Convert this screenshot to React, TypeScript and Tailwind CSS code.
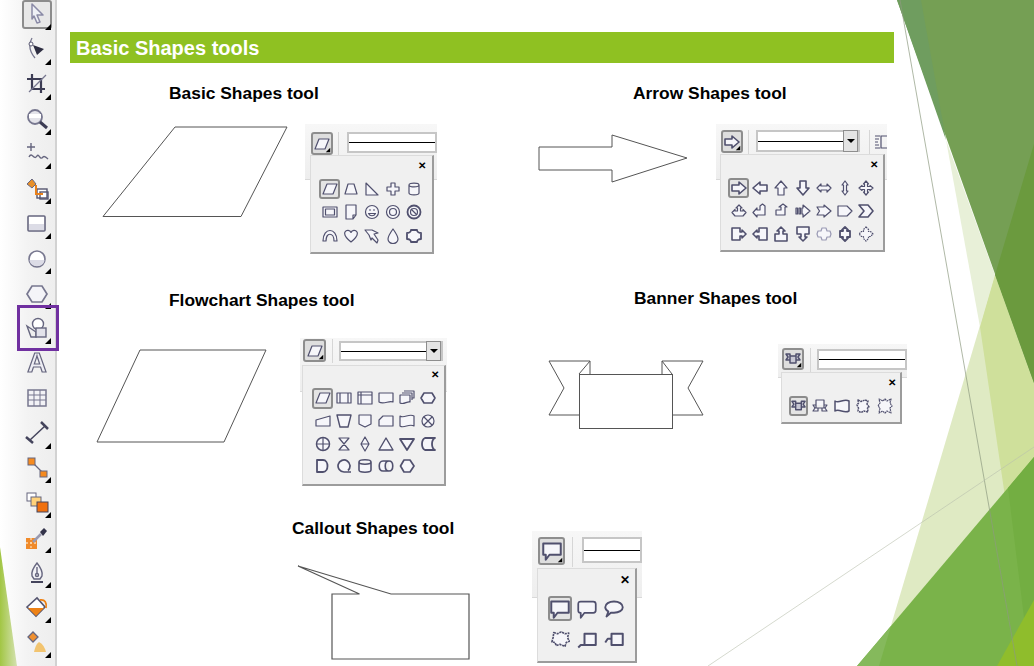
import type { ReactNode } from "react";

const ink = "#50506e";

// small shape glyphs for the flyouts, all in a 16x16 box
const shapes: Record<string, ReactNode> = {
  para: <path d="M5 3H15L11 13H1Z" />,
  trap: <path d="M5 3H11L14 13H2Z" />,
  rtri: <path d="M2 2L14 14H2Z" />,
  cross: <path d="M6 2H10V6H14V10H10V14H6V10H2V6H6Z" />,
  can: <path d="M3 4C3 1.5 13 1.5 13 4V12C13 14.5 3 14.5 3 12ZM3 4C3 6.5 13 6.5 13 4" />,
  frame: <path d="M1 3H15V13H1ZM3.5 5H12.5V11H3.5Z" />,
  page: <path d="M3 1H13V11L10 15H3ZM13 11H10V15" />,
  smile: <><circle cx="8" cy="8" r="6.5" /><path d="M5 6H7M9 6H11M4.5 9.5C6 12.5 10 12.5 11.5 9.5Z" /></>,
  ring: <><circle cx="8" cy="8" r="6.5" /><circle cx="8" cy="8" r="3.5" /></>,
  noway: <><circle cx="8" cy="8" r="6.5" strokeWidth="1.8" /><circle cx="8" cy="8" r="3.5" /><path d="M5 5L11 11" /></>,
  arch: <path d="M1 13C1 -1 15 -1 15 13H12C12 4 4 4 4 13Z" />,
  heart: <path d="M8 14C2 9 1 6 2 4C3.5 1.5 7 2 8 4.5C9 2 12.5 1.5 14 4C15 6 14 9 8 14Z" />,
  bolt: <path d="M1 2L8 2L14 5L10 6L14 12L13 15L8 10L7 12L5 7Z" />,
  drop: <path d="M8 1C8 1 13 8 13 11A5 4.5 0 0 1 3 11C3 8 8 1 8 1Z" />,
  plaque: <path strokeWidth="1.8" d="M5 2H11C11 3 12 5 15 5V11C12 11 11 13 11 14H5C5 13 4 11 1 11V5C4 5 5 3 5 2Z" />,
  aR: <path strokeWidth="1.6" d="M1 5H8V2L15 8L8 14V11H1Z" />,
  aL: <path strokeWidth="1.6" d="M15 5H8V2L1 8L8 14V11H15Z" />,
  aU: <path d="M5 15V8H2L8 1L14 8H11V15Z" />,
  aD: <path strokeWidth="1.6" d="M5 1V8H2L8 15L14 8H11V1Z" />,
  aLR: <path d="M1 8L5 4V6H11V4L15 8L11 12V10H5V12Z" />,
  aUD: <path d="M8 1L11 5H9.5V11H11L8 15L5 11H6.5V5H5Z" />,
  a4: <path d="M8 1L10.5 4H9.5V6.5H12V5.5L15 8L12 10.5V9.5H9.5V12H10.5L8 15L5.5 12H6.5V9.5H4V10.5L1 8L4 5.5V6.5H6.5V4H5.5Z" />,
  a3: <path d="M8 2L11 5H9.5V8H12V6.5L15 9.5L12 13H4L1 9.5L4 6.5V8H6.5V5H5Z" />,
  aBL: <path d="M13 3V12H5V14L1 9.5L5 5V7H8V3L10.5 1Z" />,
  aBR: <path d="M3 12V7H8V4H6L10 1L14 4H12V12Z" />,
  aStripe: <path d="M1 5H2.5V11H1ZM4 5H5.5V11H4ZM7 5H8V2L15 8L8 14V11H7Z" />,
  aNotch: <path d="M1 4H8V2L15 8L8 14V12H1L3.5 8Z" />,
  pent: <path d="M1 3H10L15 8L10 13H1Z" />,
  chev: <path strokeWidth="1.6" d="M1 2H10L15 8L10 14H1L6 8Z" />,
  callR: <path strokeWidth="1.6" d="M1 2H9V6H11V4L15 8L11 12V10H9V14H1Z" />,
  callL: <path strokeWidth="1.6" d="M15 2H7V6H5V4L1 8L5 12V10H7V14H15Z" />,
  callU: <path strokeWidth="1.6" d="M2 8H6V5H4L8 1L12 5H10V8H14V15H2Z" />,
  callD: <path strokeWidth="1.6" d="M2 1H14V8H10V11H12L8 15L4 11H6V8H2Z" />,
  crossLt: <path stroke="#9a9ab4" d="M6 2H10L11 5H14L15 8L14 11H11L10 14H6L5 11H2L1 8L2 5H5Z" />,
  callUD: <path strokeWidth="1.8" d="M8 1L11 4H10V5H13V11H10V12H11L8 15L5 12H6V11H3V5H6V4H5Z" />,
  call4: <path strokeDasharray="1.6 0.8" d="M8 1L10.5 3.5V5.5H12.5L15 8L12.5 10.5H10.5V12.5L8 15L5.5 12.5V10.5H3.5L1 8L3.5 5.5H5.5V3.5Z" />,
  bars: <path d="M1 3H15V13H1ZM4 3V13M12 3V13" />,
  store: <path d="M1 2H15V14H1ZM4 2V14M1 5H15" />,
  doc: <path d="M1 3H15V12C11 10 6 15 1 12Z" />,
  docs: <path d="M5 1H15V8H13M3 3H13V10M1 5H11V12C8 11 5 15 1 13Z" />,
  hex: <path strokeWidth="1.6" d="M4 3H12L15 8L12 13H4L1 8Z" />,
  manual: <path d="M1 7L15 3V13H1Z" />,
  manop: <path strokeWidth="1.4" d="M1 2H15L12 14H4Z" />,
  offpage: <path d="M2 2H14V11L8 14L2 11Z" />,
  card: <path d="M5 3H15V13H1V7Z" />,
  tape: <path d="M1 3C5 6 10 0 15 3V13C10 10 5 16 1 13Z" />,
  sum: <><circle cx="8" cy="8" r="6" /><path d="M4 4L12 12M12 4L4 12" /></>,
  or: <><circle cx="8" cy="8" r="6.5" strokeWidth="1.5" /><path d="M1.5 8H14.5M8 1.5V14.5" /></>,
  collate: <path d="M3 2H13L3 14H13Z" />,
  sort: <path d="M8 1L12 8L8 15L4 8ZM4 8H12" />,
  extract: <path strokeWidth="1.4" d="M8 2L15 14H1Z" />,
  merge: <path strokeWidth="1.8" d="M1 3H15L8 14Z" />,
  stored: <path strokeWidth="1.8" d="M5 2H15C11 4 11 12 15 14H5C1 12 1 4 5 2Z" />,
  delay: <path strokeWidth="1.8" d="M2 2H8C14 2 14 14 8 14H2Z" />,
  seq: <path strokeWidth="1.7" d="M8 14H15M8 14A6 6 0 1 1 12 12.5" />,
  disk: <path strokeWidth="1.6" d="M2 4C2 1 14 1 14 4V12C14 15 2 15 2 12ZM2 4C2 7 14 7 14 4" />,
  drum: <path strokeWidth="1.6" d="M5 3H11C16 3 16 13 11 13H5C0 13 0 3 5 3ZM11 3C6 3 6 13 11 13" />,
  disp: <path strokeWidth="1.7" d="M5 2H11L15 8L11 14H5L1.5 8Z" />,
  rib: <path fill="#c8c8d4" strokeWidth="1.5" d="M1 3H5V5H11V3H15L13 6L15 9H11V12H5V9H1L3 6ZM5 5V9M11 5V9" />,
  rib2: <path d="M4 2H12V7H15L13 10L15 13H10V10H6V13H1L3 10L1 7H4ZM4 7V10H12V7" />,
  wave: <path strokeWidth="1.5" d="M1 3C5 6 10 0 15 3V13C10 16 5 10 1 13Z" />,
  burst: <path strokeWidth="1.5" strokeDasharray="2 0.6" d="M3 2L6 3.5L10 2L13 3L12 6L14 9L12.5 10L13 14L9 13L6 14.5L3 13L3.5 10L2 7L3.5 5Z" />,
  star: <path strokeWidth="1.2" strokeDasharray="1.8 0.6" d="M2 1L6 3L8 1L10 3L14 1L13 5L15 8L13 10L14 15L10 13L8 15L5.5 13L2 15L3 10L1 8L3 5Z" />,
  cRect: <path strokeWidth="1.6" d="M1 2H15V11H6L3 15V11H1Z" />,
  cRound: <path strokeWidth="1.4" d="M3 2H13C15 2 15 3 15 4V9C15 10 15 11 13 11H6L3 15V11C1 11 1 10 1 9V4C1 3 1 2 3 2Z" />,
  cOval: <path strokeWidth="1.5" d="M8 2C12 2 15 4 15 6.5C15 9 12 11 8 11C7 11 6 11 5.5 11L2 14L3.5 10C2 9 1 8 1 6.5C1 4 4 2 8 2Z" />,
  cCloud: <path strokeWidth="1.3" strokeDasharray="1.8 0.6" d="M3 2L6 3L9 1.5L12 3L15 2.5L14 6L15.5 9L13 10L12 13L8 11.5L5 12.5L4 10L1.5 9.5L2.5 6Z" />,
  cLine1: <path strokeWidth="1.6" d="M6 3H15V12H6ZM6 12H3L1 14" />,
  cLine2: <path strokeWidth="1.6" d="M6 3H15V12H6ZM6 7H3L1 10" />,
};

function Glyph({ name, size = 16 }: { name: string; size?: number }) {
  return (
    <svg className="blur-[0.3px]" width={size} height={size} viewBox="0 0 16 16" fill="#f6f6fa" stroke={ink} strokeWidth="1.2" strokeLinejoin="round">
      {shapes[name]}
    </svg>
  );
}

function Corner({ className = "right-0 bottom-0" }: { className?: string }) {
  return <span className={`absolute w-0 h-0 border-l-[6px] border-l-transparent border-b-[6px] border-b-black ${className}`} />;
}

type PaletteProps = {
  box: string;
  strip: string;
  button: string;
  sep: string;
  field: string;
  panel: string;
  grid: string;
  active: string;
  close: string;
  icon: string;
  iconSize?: number;
  btnIconSize?: number;
  rows: string[];
  dropdown?: boolean;
  extra?: boolean;
};

function Palette(p: PaletteProps) {
  return (
    <div className={`relative shrink-0 ${p.box}`}>
      <div className={`flex items-start bg-gradient-to-b from-[#f7f7f7] to-[#eeeeee] border-b border-[#d9d9d9] overflow-hidden ${p.strip}`}>
        <div className={`relative shrink-0 flex items-center justify-center border-2 border-[#8e8e8e] rounded-[3px] bg-[#dedede] ${p.button}`}>
          <Glyph name={p.icon} size={p.btnIconSize ?? 16} />
          <Corner className="right-[0px] bottom-[0px] scale-75" />
        </div>
        <div className={`shrink-0 w-px bg-[#d6d6d6] ${p.sep}`} />
        <div className={`relative shrink-0 flex items-center bg-white border-2 border-[#c6c6c6] ${p.field}`}>
          <div className="h-px w-full bg-black" />
          {p.dropdown && (
            <div className="absolute right-0 -top-[2px] -bottom-[2px] w-[15px] flex items-center justify-center bg-[#e4e4e4] border border-[#8e8e8e]">
              <span className="w-0 h-0 border-x-[4px] border-t-[4px] border-x-transparent border-t-black" />
            </div>
          )}
        </div>
        {p.extra && (
          <>
            <div className="shrink-0 ml-[9px] w-px h-[24px] bg-[#d6d6d6]" />
            <div className="shrink-0 ml-[5px] mt-[4px] w-[12px] h-[16px] overflow-hidden">
              <svg width="18" height="16" viewBox="0 0 18 16" fill="none" stroke={ink} strokeWidth="1.2">
                <path d="M0 2H5M0 5H4M0 8H3M0 11H4M0 14H5M6 2H18V14H6Z" />
              </svg>
            </div>
          </>
        )}
      </div>
      <div className={`absolute bg-[#f0f0f0] border-t border-l border-[#dcdcdc] border-r-2 border-b-2 border-r-[#9c9c9c] border-b-[#9c9c9c] ${p.panel}`}>
        <span className={`absolute font-['Liberation_Sans',sans-serif] font-bold text-black leading-none ${p.close}`}>✕</span>
        <div className={`grid ${p.grid}`}>
          {p.rows.flatMap((row) => row.split(" ")).map((name, i) => (
            <div key={i} className="flex items-center justify-center">
              <div className={i === 0 ? `flex items-center justify-center shrink-0 border-2 border-[#8c8c8c] rounded-[3px] bg-[#e4e4e4] ${p.active}` : "flex items-center justify-center"}>
                <Glyph name={name} size={p.iconSize ?? 16} />
              </div>
            </div>
          ))}
        </div>
      </div>
    </div>
  );
}

const toolIcons: ReactNode[] = [
  <path key="0" d="M7 2L18 13H12L15 20L12 21L9 14L7 17Z" fill="#eef0f6" stroke="#8a8aa6" strokeWidth="1.5" strokeLinejoin="round" />,
  <g key="1"><path d="M7 1C3 8 5 15 10 21" fill="none" stroke="#77778f" strokeWidth="1.3" /><circle cx="6" cy="7" r="2" fill="#fff" stroke="#55556f" /><path d="M8 8L19 12L12 18Z" fill="#2e2e42" /></g>,
  <g key="2" fill="none" stroke="#3c3c54" strokeWidth="2.2"><path d="M7 2V17H20" /><path d="M2 7H16V21" /><path d="M4 20L21 3" strokeWidth="1.3" stroke="#77778f" /></g>,
  <g key="3"><circle cx="10" cy="10" r="7" fill="#e4e4ea" stroke="#77778f" strokeWidth="1.8" /><path d="M4 9H16" stroke="#fff" strokeWidth="4" /><path d="M15 15L22 21" stroke="#3c3c54" strokeWidth="3" /></g>,
  <g key="4" fill="none" stroke="#66667f" strokeWidth="1.4"><path d="M6 1V9M2 5H10" /><path d="M4 15C7 9 9 19 12 14C14 11 15 19 18 15C19 14 21 15 23 17" /></g>,
  <g key="5"><rect x="12" y="12" width="10" height="9" fill="#fff" stroke="#55556f" strokeWidth="1.4" /><rect x="15" y="15" width="8" height="7" fill="none" stroke="#55556f" strokeWidth="1.4" /><path d="M2 7L7 2L11 7L7 11Z" fill="#e8902a" stroke="#66667f" /><path d="M11 8V17H18" fill="none" stroke="#e8801a" strokeWidth="2" /></g>,
  <g key="6"><rect x="3" y="4" width="17" height="15" rx="1" fill="#fff" stroke="#66667f" strokeWidth="1.6" /><rect x="4" y="12" width="15" height="6" fill="#dcdce6" /></g>,
  <g key="7"><ellipse cx="12" cy="12" rx="8" ry="8" fill="#fff" stroke="#77778f" strokeWidth="1.6" /><path d="M4.5 13H19.5C19 17 16 19 12 19C8 19 5 17 4.5 13Z" fill="#dcdce6" /></g>,
  <path key="8" d="M7 4H17L22 12L17 20H7L2 12Z" fill="#f4f4f8" stroke="#77778f" strokeWidth="1.7" />,
  <g key="9"><circle cx="13" cy="8" r="5.5" fill="#fff" stroke="#66667f" strokeWidth="1.4" /><path d="M2 10L11 16V21H6Z" fill="#eee" stroke="#66667f" strokeWidth="1.4" /><rect x="11" y="12" width="10" height="9" fill="#e2e2ea" stroke="#66667f" strokeWidth="1.4" /></g>,
  null,
  <g key="11" fill="none" stroke="#77778f"><rect x="3" y="4" width="18" height="16" fill="#f2f2f6" strokeWidth="1.5" /><path d="M3 9H21M3 14H21M9 4V20M15 4V20" /></g>,
  <g key="12" stroke="#44445c" fill="none"><path d="M5 19L20 5" strokeWidth="1.5" /><path d="M1 16L8 22M16 1L23 8" strokeWidth="2.5" /></g>,
  <g key="13"><path d="M7 6L18 17" stroke="#66667f" strokeWidth="1.3" /><rect x="3" y="2" width="7" height="7" fill="#f58a1f" stroke="#66667f" /><rect x="15" y="15" width="7" height="6" fill="#f58a1f" stroke="#66667f" /></g>,
  <g key="14"><rect x="2" y="2" width="9" height="8" fill="#fff" stroke="#66667f" /><rect x="6" y="6" width="10" height="9" fill="#ffd27a" stroke="#66667f" /><rect x="12" y="11" width="11" height="10" fill="#f0700f" stroke="#44445c" /></g>,
  <g key="15"><rect x="1" y="12" width="11" height="11" fill="#f08a2a" /><path d="M1 17H12M6 12V23" stroke="#fbd9b0" strokeWidth="1.3" strokeDasharray="2 2" /><path d="M8 16L16 8" stroke="#9a9ab0" strokeWidth="2.5" /><path d="M15 6L19 2L22 5L18 10Z" fill="#33334a" /></g>,
  <g key="16" fill="#f2f2f6" stroke="#66667f" strokeWidth="1.4"><path d="M12 2C16 7 18 11 17 15L15 18H9L7 15C6 11 8 7 12 2Z" /><path d="M12 6V12" /><circle cx="12" cy="14" r="1.5" /><path d="M6 21H18" strokeWidth="2" stroke="#44445c" /></g>,
  <g key="17"><path d="M2 11L12 2L20 11L11 20Z" fill="#fff" stroke="#55556f" strokeWidth="1.6" /><path d="M3 12H19L11 20Z" fill="#ee8215" /><path d="M15 4C20 3 22 7 21 12" fill="none" stroke="#ee8215" strokeWidth="1.8" /></g>,
  <g key="18"><path d="M3 7L8 2L13 7L8 12Z" fill="#f09030" stroke="#66667f" strokeWidth="1.3" /><path d="M14 12C18 14 20 18 21 22H9C10 18 11 14 14 12Z" fill="#f2c470" /></g>,
];

// which tools have the little flyout corner
const noCorner = [10, 11];

function Toolbar() {
  return (
    <div className="relative shrink-0 w-[57px] h-[669px] bg-gradient-to-r from-white/0 via-[#f3f3f3] to-[#eeeeee] border-r-2 border-[#d2d2d2] pl-[22px] flex flex-col -mt-[3px]">
      {toolIcons.map((icon, i) => (
        <div key={i} className="relative shrink-0 w-[30px] h-[34.9px] flex items-center justify-center">
          {i === 0 && <div className="absolute left-0 right-0 top-[3px] bottom-[3px] rounded-[3px] border-2 border-[#8c8c8c] bg-[#e8e8e8]" />}
          {i === 9 && <div className="absolute -left-[5px] -top-[6px] w-[42px] h-[46px] border-[3px] border-[#7030a0]" />}
          {i === 10 ? (
            <span className="text-[27px] leading-[30px] font-bold text-[#eeeef4] [-webkit-text-stroke:1.2px_#66667f] blur-[0.3px]">A</span>
          ) : (
            <svg className="relative blur-[0.3px]" width="24" height="24" viewBox="0 0 24 24">
              {icon}
            </svg>
          )}
          {!noCorner.includes(i) && <Corner className="right-[1px] bottom-[2px]" />}
        </div>
      ))}
    </div>
  );
}

function Title({ className, children }: { className: string; children: string }) {
  return <h2 className={`h-[18px] leading-[18px] text-[17.4px] font-bold text-black whitespace-nowrap ${className}`}>{children}</h2>;
}

const outline = { fill: "white", stroke: "#555", strokeWidth: 1 };

export default function App() {
  return (
    <div className="relative w-[1034px] h-[666px] overflow-hidden bg-white font-['Liberation_Sans',Arial,sans-serif]">
      {/* slide theme facets behind everything */}
      <svg className="absolute inset-0" width="1034" height="666" viewBox="0 0 1034 666">
        <polygon points="0,547 17,666 0,666" fill="#a2c644" />
        <polygon points="995,275 879,666 1034,666 1034,383" fill="#dfeac3" />
        <polygon points="946,140 995,275 980,327" fill="#e8f0d8" />
        <polygon points="980,327 995,275 1034,383 1034,666 1030,666" fill="#cfe09b" />
        <polygon points="897,0 1034,0 1034,383" fill="#759f54" />
        <polygon points="897,0 921,0 946,140" fill="#6f9d5f" />
        <polygon points="995,275 1034,144 1034,383" fill="#6b9a3e" />
        <polygon points="1034,457 857,666 1034,666" fill="#7ab34a" />
        <polygon points="891,626 857,666 879,666" fill="#85b95c" />
        <polygon points="1008,488 1034,457 1034,666 1030,666" fill="#73ae42" />
        <polygon points="1034,600 997,666 1034,666" fill="#8fbd2c" />
        <path d="M900 0L1017 666" stroke="#8d9a80" strokeOpacity="0.7" strokeWidth="1" fill="none" />
        <path d="M708 666L1034 447" stroke="#b9c0ae" strokeOpacity="0.6" strokeWidth="1" fill="none" />
      </svg>

      <div className="relative flex h-full">
        <Toolbar />
        <main className="ml-[13px] pt-[32px] flex flex-col w-[824px]">
          <h1 className="h-[31px] leading-[33px] pl-[6px] bg-[#8fc122] text-white text-[20px] font-bold">Basic Shapes tools</h1>

          <div className="mt-[21px] grid grid-cols-[460px_364px] grid-rows-[205px_230px]">
            <section>
              <Title className="ml-[99px]">Basic Shapes tool</Title>
              <div className="flex items-start mt-[22px]">
                <svg className="ml-[30px] shrink-0" width="190" height="96" viewBox="100 124 190 96">
                  <polygon points="103,216.5 175,127 287,127 241,216.5" {...outline} />
                </svg>
                <div className="ml-[15px]">
                  <Palette
                    box="w-[132px] h-[130px]"
                    strip="w-[132px] h-[56px] pl-[6px] pt-[8px]"
                    button="w-[22px] h-[23px]"
                    sep="ml-[5px] h-[24px]"
                    field="ml-[8px] w-[90px] h-[21px]"
                    panel="left-[5px] top-[31px] w-[124px] h-[99px]"
                    grid="grid-cols-[repeat(5,21px)] auto-rows-[23.5px] pl-[8px] pt-[21px]"
                    active="w-[21px] h-[20px]"
                    close="right-[6px] top-[5px] text-[10px]"
                    icon="para"
                    rows={["para trap rtri cross can", "frame page smile ring noway", "arch heart bolt drop plaque"]}
                  />
                </div>
              </div>
            </section>

            <section>
              <Title className="ml-[103px]">Arrow Shapes tool</Title>
              <div className="flex items-start mt-[22px]">
                <svg className="ml-[5px] mt-[6px] shrink-0" width="155" height="60" viewBox="535 130 155 60">
                  <polygon points="539,147 612,147 612,135 687,158 612,182 612,170 539,170" {...outline} />
                </svg>
                <div className="ml-[26px]">
                  <Palette
                    box="w-[171px] h-[130px]"
                    strip="w-[171px] h-[56px] pl-[5px] pt-[6px]"
                    button="w-[22px] h-[23px]"
                    sep="ml-[5px] h-[24px]"
                    field="ml-[7px] w-[104px] h-[22px]"
                    panel="left-[4px] top-[30px] w-[165px] h-[98px]"
                    grid="grid-cols-[repeat(7,21.3px)] auto-rows-[23px] pl-[7px] pt-[21px]"
                    active="w-[21px] h-[20px]"
                    close="right-[5px] top-[5px] text-[10px]"
                    icon="aR"
                    dropdown
                    extra
                    rows={["aR aL aU aD aLR aUD a4", "a3 aBL aBR aStripe aNotch pent chev", "callR callL callU callD crossLt callUD call4"]}
                  />
                </div>
              </div>
            </section>

            <section className="mt-[2px]">
              <Title className="ml-[99px]">Flowchart Shapes tool</Title>
              <div className="flex items-start mt-[29px]">
                <svg className="ml-[25px] mt-[10px] shrink-0" width="175" height="96" viewBox="95 348 175 96">
                  <polygon points="97,442 140,350 266,350 224,442" {...outline} />
                </svg>
                <div className="ml-[30px]">
                  <Palette
                    box="w-[147px] h-[148px]"
                    strip="w-[147px] h-[54px] pl-[3px] pt-[1px]"
                    button="w-[23px] h-[23px]"
                    sep="ml-[6px] h-[24px]"
                    field="ml-[6px] mt-[2px] w-[104px] h-[20px]"
                    panel="left-[2px] top-[27px] w-[144px] h-[121px]"
                    grid="grid-cols-[repeat(6,21px)] auto-rows-[22.7px] pl-[9px] pt-[21px]"
                    active="w-[21px] h-[21px]"
                    close="right-[5px] top-[4px] text-[10px]"
                    icon="para"
                    dropdown
                    rows={["para bars store doc docs hex", "manual manop offpage card tape sum", "or collate sort extract merge stored", "delay seq disk drum disp"]}
                  />
                </div>
              </div>
            </section>

            <section>
              <Title className="ml-[104px]">Banner Shapes tool</Title>
              <div className="flex items-start mt-[37px]">
                <svg className="ml-[15px] mt-[14px] shrink-0" width="162" height="74" viewBox="545 358 162 74">
                  <g fill="white" stroke="#555" strokeWidth="1">
                    <path d="M579 415H549L564 388L549 361H590V374M579 374L590 361" />
                    <path d="M672 415H703L688 388L703 361H662V374M672 374L662 361" />
                    <rect x="579.5" y="374.5" width="93" height="54" />
                  </g>
                </svg>
                <div className="ml-[71px]">
                  <Palette
                    box="w-[129px] h-[80px]"
                    strip="w-[129px] h-[34px] pl-[4px] pt-[4px]"
                    button="w-[22px] h-[22px]"
                    sep="ml-[6px] h-[24px]"
                    field="ml-[6px] mt-[1px] w-[90px] h-[21px]"
                    panel="left-[3px] top-[28px] w-[121px] h-[52px]"
                    grid="grid-cols-[repeat(5,21.5px)] auto-rows-[22px] pl-[6px] pt-[22px]"
                    active="w-[19px] h-[20px]"
                    close="right-[4px] top-[5px] text-[10px]"
                    icon="rib"
                    rows={["rib rib2 wave burst star"]}
                  />
                </div>
              </div>
            </section>
          </div>

          <div className="flex items-start">
            <section className="ml-[222px] w-[240px] shrink-0">
              <Title className="">Callout Shapes tool</Title>
              <svg className="ml-[3px] mt-[27px]" width="177" height="98" viewBox="295 564 177 98">
                <polygon points="298,566 391,594 469,594 469,659 332,659 332,594 359.5,594" fill="white" stroke="#555" strokeWidth="1.2" />
              </svg>
            </section>
            <div className="mt-[12px]">
              <Palette
                box="w-[110px] h-[132px]"
                strip="w-[110px] h-[67px] pl-[6px] pt-[6px]"
                button="w-[27px] h-[28px]"
                sep="ml-[7px] h-[30px]"
                field="ml-[9px] w-[60px] h-[26px]"
                panel="left-[5px] top-[37px] w-[100px] h-[95px]"
                grid="grid-cols-[repeat(3,27px)] auto-rows-[31px] pl-[8px] pt-[24px]"
                active="w-[24px] h-[25px]"
                close="right-[5px] top-[5px] text-[12px]"
                icon="cRect"
                iconSize={20}
                btnIconSize={20}
                rows={["cRect cRound cOval", "cCloud cLine1 cLine2"]}
              />
            </div>
          </div>
        </main>
      </div>
    </div>
  );
}
